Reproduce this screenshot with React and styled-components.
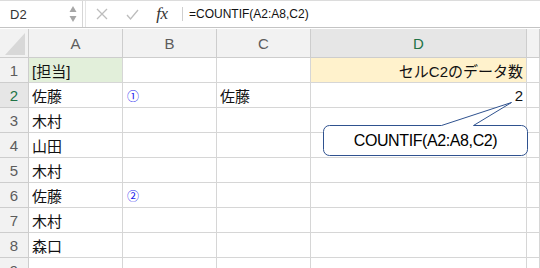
import React from 'react';
import styled, { createGlobalStyle } from 'styled-components';

const GlobalStyle = createGlobalStyle`
  html, body {
    margin: 0;
    padding: 0;
    background: #fff;
    overflow: hidden;
  }
`;

const Page = styled.div`
  position: relative;
  width: 540px;
  height: 268px;
  overflow: hidden;
  font-family: "Liberation Sans", "Noto Sans CJK JP", sans-serif;
`;

// 数式バー
const FormulaBar = styled.div`
  display: flex;
  align-items: center;
  border-top: 1px solid #dcdcdc;
  border-bottom: 1px solid #c4c4c4;
  box-sizing: border-box;
  height: 28px;
  margin-bottom: 1px;
`;

const NameBox = styled.div`
  display: flex;
  align-items: center;
  justify-content: space-between;
  width: 83px;
  height: 100%;
  padding: 0 5px 0 10px;
  box-sizing: border-box;
  border-right: 1px solid #d6d6d6;
  font-size: 13px;
  color: #333;
`;

const Gap = styled.div`
  width: 2px;
  height: 100%;
  border-right: 1px solid #e4e4e4;
`;

const IconSlot = styled.div`
  display: flex;
  align-items: center;
  justify-content: center;
  width: ${(p) => p.$w}px;
  height: 100%;
`;

const Fx = styled.span`
  font-family: "Liberation Serif", serif;
  font-style: italic;
  font-size: 17px;
  color: #333;
  letter-spacing: -0.5px;
`;

const Divider = styled.div`
  width: 1px;
  height: 14px;
  background: #cfcfcf;
  margin: 0 6px 0 4px;
`;

const Formula = styled.div`
  font-size: 12px;
  color: #111;
`;

// シート
const Sheet = styled.div`
  display: grid;
  grid-template-columns: 29px 94px 94px 94px 216px 1fr;
  grid-template-rows: 29px;
  grid-auto-rows: 25px;
`;

const Head = styled.div`
  display: flex;
  align-items: center;
  justify-content: center;
  box-sizing: border-box;
  background: ${(p) => (p.$active ? '#e6e6e6' : '#f2f2f2')};
  border-right: 1px solid #cdcdcd;
  border-bottom: 1px solid #cdcdcd;
  color: ${(p) => (p.$active ? '#217346' : '#5c5c5c')};
  font-size: 15px;
`;

const Corner = styled(Head)`
  position: relative;
  &::after {
    content: '';
    position: absolute;
    left: 5px;
    top: 4px;
    right: 3px;
    bottom: 2px;
    background: #d8d8d8;
    clip-path: polygon(100% 0, 100% 100%, 0 100%);
  }
`;

const Cell = styled.div`
  display: flex;
  align-items: center;
  justify-content: ${(p) => (p.$right ? 'flex-end' : 'flex-start')};
  box-sizing: border-box;
  padding: 0 3px;
  background: ${(p) => p.$fill || '#fff'};
  border-right: 1px solid #d6d6d6;
  border-bottom: 1px solid #d6d6d6;
  font-size: 15px;
  color: #111;
  white-space: nowrap;
`;

const Circled = styled.span`
  font-family: "Noto Sans CJK JP", sans-serif;
  font-size: 12px;
  color: #1a1aee;
  padding-left: 1px;
`;

// 吹き出し
const CalloutShape = styled.svg`
  position: absolute;
  left: 0;
  top: 0;
  pointer-events: none;
`;

const CalloutText = styled.div`
  position: absolute;
  left: 323px;
  top: 126px;
  width: 205px;
  height: 29px;
  display: flex;
  align-items: center;
  justify-content: center;
  font-size: 16px;
  letter-spacing: -0.4px;
  color: #000;
`;

const rows = [
  { a: '[担当]', aFill: '#e2efda', d: 'セルC2のデータ数', dFill: '#fff2cc' },
  { a: '佐藤', b: '①', c: '佐藤', d: '2' },
  { a: '木村' },
  { a: '山田' },
  { a: '木村' },
  { a: '佐藤', b: '②' },
  { a: '木村' },
  { a: '森口' },
  { a: '' },
];

const r = 6;
const calloutPath = [
  `M ${323.5 + r} 125.5`,
  'L 441.5 125.5',
  'L 511.5 102.5',
  'L 473.5 125.5',
  `L ${527.5 - r} 125.5`,
  `A ${r} ${r} 0 0 1 527.5 ${125.5 + r}`,
  `L 527.5 ${155.5 - r}`,
  `A ${r} ${r} 0 0 1 ${527.5 - r} 155.5`,
  `L ${323.5 + r} 155.5`,
  `A ${r} ${r} 0 0 1 323.5 ${155.5 - r}`,
  `L 323.5 ${125.5 + r}`,
  `A ${r} ${r} 0 0 1 ${323.5 + r} 125.5`,
  'Z',
].join(' ');

export default function App() {
  return (
    <Page>
      <GlobalStyle />
      <FormulaBar>
        <NameBox>
          D2
          <svg width="8" height="18" viewBox="0 0 8 18">
            <path d="M4 1 L7.5 7 L0.5 7 Z" fill="#a6a6a6" />
            <path d="M4 17 L7.5 11 L0.5 11 Z" fill="#a6a6a6" />
          </svg>
        </NameBox>
        <Gap />
        <IconSlot $w={32}>
          <svg width="12" height="12" viewBox="0 0 12 12">
            <path d="M1 1 L11 11 M11 1 L1 11" stroke="#bdbdbd" strokeWidth="1.3" />
          </svg>
        </IconSlot>
        <IconSlot $w={28}>
          <svg width="13" height="11" viewBox="0 0 13 11">
            <path d="M1 6 L4.5 10 L12 1" stroke="#bdbdbd" strokeWidth="1.3" fill="none" />
          </svg>
        </IconSlot>
        <IconSlot $w={32}>
          <Fx>fx</Fx>
        </IconSlot>
        <Divider />
        <Formula>=COUNTIF(A2:A8,C2)</Formula>
      </FormulaBar>

      <Sheet>
        <Corner />
        <Head>A</Head>
        <Head>B</Head>
        <Head>C</Head>
        <Head $active>D</Head>
        <Head />
        {rows.map((row, i) => (
          <React.Fragment key={i}>
            <Head $active={i === 1}>{i + 1}</Head>
            <Cell $fill={row.aFill}>{row.a}</Cell>
            <Cell>{row.b && <Circled>{row.b}</Circled>}</Cell>
            <Cell>{row.c}</Cell>
            <Cell $fill={row.dFill} $right>{row.d}</Cell>
            <Cell />
          </React.Fragment>
        ))}
      </Sheet>

      <CalloutShape width="540" height="268">
        <path d={calloutPath} fill="#fff" stroke="#2f528f" strokeWidth="1" />
      </CalloutShape>
      <CalloutText>COUNTIF(A2:A8,C2)</CalloutText>
    </Page>
  );
}
